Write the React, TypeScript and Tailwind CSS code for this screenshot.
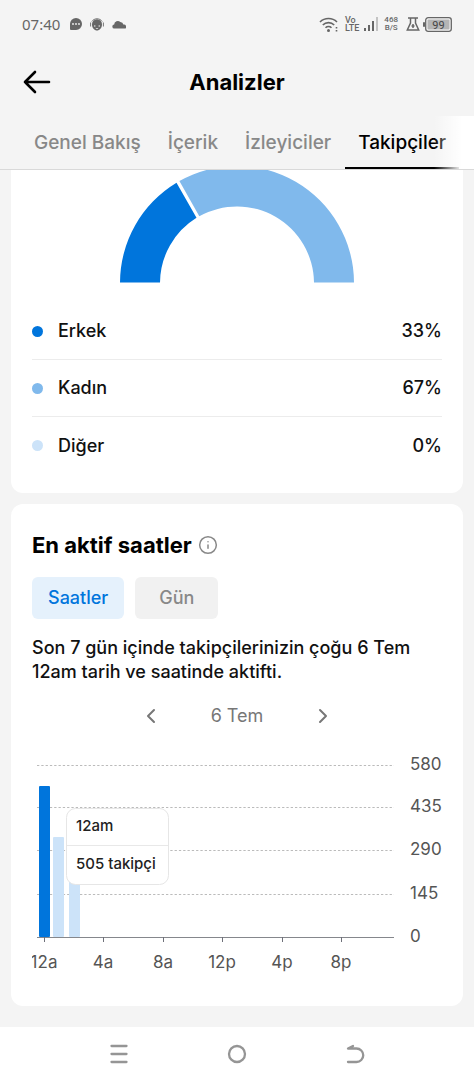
import React, { useState } from 'react';
import { ChevronLeft, ChevronRight, Info } from 'lucide-react';

const TABS = ['Genel Bakış', 'İçerik', 'İzleyiciler', 'Takipçiler'];

const GENDERS = [
  { label: 'Erkek', value: 33, dot: 'bg-[#0075dc]' },
  { label: 'Kadın', value: 67, dot: 'bg-[#80b9ec]' },
  { label: 'Diğer', value: 0, dot: 'bg-[#cce3f9]' },
];

const Y_TICKS = [
  { label: '580', y: 15 },
  { label: '435', y: 57 },
  { label: '290', y: 100 },
  { label: '145', y: 144 },
  { label: '0', y: 187 },
];

const X_TICKS = [
  { label: '12a', x: 12 },
  { label: '4a', x: 71 },
  { label: '8a', x: 131 },
  { label: '12p', x: 190 },
  { label: '4p', x: 250 },
  { label: '8p', x: 309 },
];

const BARS = [
  { x: 7, top: 36, fill: '#0075dc' },
  { x: 21, top: 87, fill: '#cce3f9' },
  { x: 37, top: 125, fill: '#cce3f9' },
];

const StatusBar = () => (
  <div className="h-12 px-[22px] flex items-center justify-between text-[#666]">
    <div className="flex items-center gap-2 font-['Noto_Sans',sans-serif]">
      <span className="text-[15px] leading-5 w-10">07:40</span>
      <svg width="12" height="12" viewBox="0 0 12 12">
        <path d="M6 0a6 6 0 1 1 0 12H1a1 1 0 0 1-1-1V6a6 6 0 0 1 6-6z" fill="currentColor" />
        <circle cx="3" cy="6" r="0.9" fill="#f4f4f4" />
        <circle cx="6" cy="6" r="0.9" fill="#f4f4f4" />
        <circle cx="9" cy="6" r="0.9" fill="#f4f4f4" />
      </svg>
      <svg width="14" height="13" viewBox="0 0 14 13">
        <path d="M1.800 3.500A6.300 6.300 0 0 1 12.200 3.500M.6 4.500v4M13.400 4.500v4" fill="none" stroke="currentColor" strokeWidth="0.9" />
        <path d="M7 1.200a5 5 0 0 1 5 5.300c0 3.500-2.500 6-5 6s-5-2.500-5-6a5 5 0 0 1 5-5.300z" fill="currentColor" />
        <circle cx="4.800" cy="8" r="0.700" fill="#f4f4f4" />
        <circle cx="9.200" cy="8" r="0.700" fill="#f4f4f4" />
        <path d="M5.800 10.300q1.200.8 2.400 0" fill="none" stroke="#f4f4f4" strokeWidth="0.7" />
      </svg>
      <svg width="14" height="9" viewBox="0 0 14 9">
        <path d="M2.500 8.500A2 2 0 0 1 2.200 4.500 3.600 3.600 0 0 1 8.300 2 3 3 0 0 1 11.300 4.600 2.300 2.300 0 0 1 13.500 8.500z" fill="currentColor" />
      </svg>
    </div>
    <div className="flex items-center font-['Roboto',sans-serif] font-medium">
      <svg width="20" height="17" viewBox="0 0 20 17" fill="none" stroke="currentColor" strokeWidth="1.600">
        <path d="M1 6a12 12 0 0 1 17 0M3.800 9a8 8 0 0 1 11.400 0M6.500 11.800a4.300 4.300 0 0 1 6 0" />
        <circle cx="9.500" cy="14.500" r="1.500" fill="currentColor" stroke="none" />
        <path d="M17.500 11v1.600M17.500 14v1.600" />
      </svg>
      <div className="ml-[6px] text-[9px] leading-[8px]">
        <div>Vo</div>
        <div>LTE</div>
      </div>
      <svg width="15" height="15" viewBox="0 0 15 15" className="ml-1" fill="currentColor">
        <rect x="1" y="11" width="2" height="3" />
        <rect x="5" y="8" width="2" height="6" />
        <rect x="9" y="4" width="2" height="10" />
        <rect x="13" y="0" width="2" height="14" opacity="0.350" />
      </svg>
      <div className="ml-[6px] text-[8px] leading-[8px] text-center">
        <div>468</div>
        <div>B/S</div>
      </div>
      <svg width="14" height="14" viewBox="0 0 14 14" className="ml-2" fill="none" stroke="currentColor" strokeWidth="1.500">
        <path d="M2 1h10M4.500 1v5L1.300 13h11.400L9.500 6V1M7 7v4M5.500 9h3" />
      </svg>
      <svg width="29" height="15" viewBox="0 0 29 15" className="ml-[3px]">
        <rect x="0" y="5" width="2" height="5" rx="1" fill="currentColor" />
        <rect x="2.700" y="0.700" width="25.600" height="13.600" rx="2.500" fill="none" stroke="currentColor" strokeWidth="1.300" />
        <rect x="4.500" y="2.500" width="22" height="10" rx="1" fill="#b5b5b5" />
        <text x="15.500" y="11.500" textAnchor="middle" fontSize="11" fontWeight="400" fill="#444">99</text>
      </svg>
    </div>
  </div>
);

const GenderCard = () => (
  <section className="bg-white rounded-b-xl px-[21px] pb-[19px]">
    <svg viewBox="0 0 410 113" className="block w-full">
      <path d="M88 112.500A117 117 0 0 1 144.500 12.800L164.500 47.800A77 77 0 0 0 128 112.500z" fill="#0075dc" />
      <path d="M147.400 11.100A117 117 0 0 1 322 112.500H282A77 77 0 0 0 167.300 46.300z" fill="#80b9ec" />
    </svg>
    <ul className="mt-5">
      {GENDERS.map((g) => (
        <li
          key={g.label}
          className="h-[57px] flex items-center border-b border-[#ececec] last:border-b-0 text-lg text-[#111] font-medium"
        >
          <span className={`size-[11px] rounded-full ${g.dot}`} />
          <span className="ml-[15px] flex-1">{g.label}</span>
          <span>{g.value}%</span>
        </li>
      ))}
    </ul>
  </section>
);

const HoursChart = () => (
  <svg viewBox="0 0 410 235" className="block w-full mt-[22px]">
    {Y_TICKS.map((t) => (
      <g key={t.label}>
        <line
          x1="5"
          x2="362"
          y1={t.y + 0.5}
          y2={t.y + 0.5}
          stroke={t.label === '0' ? '#85878c' : '#bbb'}
          strokeDasharray={t.label === '0' ? undefined : '2.300 2'}
        />
        <text x="378" y={t.y + 5} fontSize="17" fill="#555">{t.label}</text>
      </g>
    ))}
    {X_TICKS.map((t) => (
      <g key={t.label}>
        <line x1={t.x + 0.5} x2={t.x + 0.5} y1="187" y2="192" stroke="#6e7079" />
        <text x={t.x} y="218" fontSize="17" fill="#555" textAnchor="middle">{t.label}</text>
      </g>
    ))}
    {BARS.map((b) => (
      <rect key={b.x} x={b.x} y={b.top} width="11" height={187 - b.top} rx="1" fill={b.fill} />
    ))}
    <rect x="34.500" y="58.500" width="102" height="76" rx="9" fill="#fff" stroke="#e6e6e6" />
    <line x1="35" x2="136" y1="95.500" y2="95.500" stroke="#e8e8e8" />
    <text x="44" y="81" fontSize="15" fontWeight="500" fill="#222">12am</text>
    <text x="44" y="119" fontSize="15" fontWeight="500" fill="#222">505 takipçi</text>
  </svg>
);

const ActiveTimesCard = () => {
  const [mode, setMode] = useState('Saatler');
  return (
    <section className="mt-[11px] bg-white rounded-xl px-[21px] pt-[25px] pb-[21px]">
      <div className="flex items-center gap-[6px]">
        <h2 className="text-[22px] leading-8 font-bold text-black">En aktif saatler</h2>
        <button aria-label="Bilgi">
          <Info className="size-5 text-[#888]" strokeWidth={1.8} />
        </button>
      </div>
      <div className="mt-4 flex gap-[11px] text-lg font-medium">
        {['Saatler', 'Gün'].map((m) => (
          <button
            key={m}
            onClick={() => setMode(m)}
            className={`h-[42px] rounded-md ${
              m === mode ? 'px-4 bg-[#e5f1fc] text-[#0075dc]' : 'px-6 bg-[#f1f1f1] text-[#888]'
            }`}
          >
            {m}
          </button>
        ))}
      </div>
      <p className="mt-[17px] text-lg leading-6 font-medium text-[#111]">
        Son 7 gün içinde takipçilerinizin çoğu 6 Tem 12am tarih ve saatinde aktifti.
      </p>
      <div className="mt-5 flex items-center justify-center text-[#777]">
        <button aria-label="Önceki gün">
          <ChevronLeft className="size-6" />
        </button>
        <span className="w-[148px] text-center text-lg leading-6">6 Tem</span>
        <button aria-label="Sonraki gün">
          <ChevronRight className="size-6" />
        </button>
      </div>
      <HoursChart />
    </section>
  );
};

const SystemNav = () => (
  <nav className="h-[53px] mt-auto bg-white flex items-center justify-center gap-[94px] text-[#959595]">
    <button aria-label="Son uygulamalar">
      <svg width="24" height="24" viewBox="0 0 24 24" stroke="currentColor" strokeWidth="2.300" strokeLinecap="round">
        <path d="M4.500 4h15M4.500 12h15M4.500 20h15" />
      </svg>
    </button>
    <button aria-label="Ana ekran">
      <svg width="24" height="24" viewBox="0 0 24 24" fill="none" stroke="currentColor" strokeWidth="2.300">
        <circle cx="12" cy="12" r="8" />
      </svg>
    </button>
    <button aria-label="Geri">
      <svg width="24" height="24" viewBox="0 0 24 24" fill="none" stroke="currentColor" strokeWidth="2.300" strokeLinecap="round" strokeLinejoin="round">
        <path d="M10 4L5 6.500h8.500a6.700 6.700 0 0 1 0 13.500H5" />
      </svg>
    </button>
  </nav>
);

export default function App() {
  const [tab, setTab] = useState('Takipçiler');
  return (
    <div className="min-h-screen flex flex-col bg-[#f4f4f4] font-['Inter',sans-serif]">
      <StatusBar />
      <header className="h-[68px] px-[22px] flex items-center justify-between">
        <button aria-label="Geri dön">
          <svg width="29" height="24" viewBox="0 0 29 24" fill="none" stroke="#000" strokeWidth="2.600" strokeLinecap="round" strokeLinejoin="round">
            <path d="M27 12H3M13 2L3 12l10 10" />
          </svg>
        </button>
        <h1 className="text-[22px] leading-8 font-bold text-black">Analizler</h1>
        <span className="w-[29px]" />
      </header>
      <div className="relative h-[54px] pl-[21px] flex gap-px border-b border-[#d9d9d9] overflow-hidden">
        {TABS.map((t) => (
          <button
            key={t}
            onClick={() => setTab(t)}
            className={`px-[13px] pt-1 text-[19px] font-medium whitespace-nowrap border-b-2 ${
              t === tab ? 'border-black text-black' : 'border-transparent text-[#888]'
            }`}
          >
            {t}
          </button>
        ))}
        <div className="absolute right-0 inset-y-0 w-10 bg-linear-to-r from-transparent to-white to-70% pointer-events-none" />
      </div>
      <main className="px-[11px] pb-5">
        <GenderCard />
        <ActiveTimesCard />
      </main>
      <SystemNav />
    </div>
  );
}
